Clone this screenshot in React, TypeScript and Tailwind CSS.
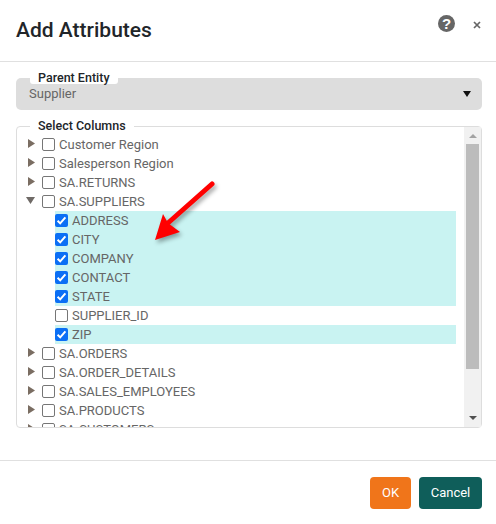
const topRows = ['Customer Region', 'Salesperson Region', 'SA.RETURNS']
const children = [
  { name: 'ADDRESS', checked: true },
  { name: 'CITY', checked: true },
  { name: 'COMPANY', checked: true },
  { name: 'CONTACT', checked: true },
  { name: 'STATE', checked: true },
  { name: 'SUPPLIER_ID', checked: false },
  { name: 'ZIP', checked: true },
]
const bottomRows = ['SA.ORDERS', 'SA.ORDER_DETAILS', 'SA.SALES_EMPLOYEES', 'SA.PRODUCTS', 'SA.CUSTOMERS']

function Checkbox({ checked }: { checked: boolean }) {
  if (checked) {
    return (
      <span className="flex h-[13px] w-[13px] shrink-0 items-center justify-center rounded-[2px] bg-[#0b6ff5]">
        <svg viewBox="0 0 13 13" className="h-[13px] w-[13px]">
          <path d="M2.6 6.8 5.2 9.4 10.4 3.4" fill="none" stroke="#fff" strokeWidth="2" />
        </svg>
      </span>
    )
  }
  return <span className="h-[13px] w-[13px] shrink-0 rounded-[2px] border border-[#767676] bg-white" />
}

function ParentRow({ label, open = false }: { label: string; open?: boolean }) {
  return (
    <div className="flex h-[19px] items-center">
      <span className="flex w-[25px] shrink-0 justify-end pr-[7px]">
        {open ? (
          <svg viewBox="0 0 9 7" className="mb-[3px] h-[7px] w-[9px]">
            <path d="M0 0H9L4.5 7Z" fill="#6f6a66" />
          </svg>
        ) : (
          <svg viewBox="0 0 7 9" className="mb-[3px] h-[9px] w-[7px]">
            <path d="M0 0 7 4.5 0 9Z" fill="#7a6d62" />
          </svg>
        )}
      </span>
      <Checkbox checked={false} />
      <span className="ml-[4px] text-[13px] text-[#666666]">{label}</span>
    </div>
  )
}

function ChildRow({ label, checked }: { label: string; checked: boolean }) {
  return (
    <div className={`ml-[38px] flex h-[19px] w-[401px] items-center ${checked ? 'bg-[#c9f3f2]' : ''}`}>
      <Checkbox checked={checked} />
      <span className="ml-[4px] text-[13px] text-[#666666]">{label}</span>
    </div>
  )
}

export default function App() {
  return (
    <div className="relative flex h-[524px] w-[496px] flex-col bg-white font-['Roboto',sans-serif]">
      <header className="flex h-[62px] shrink-0 justify-between border-b border-[#e0e0e0] pl-[16px] pr-[15px]">
        <h1 className="mt-[15px] text-[21px] leading-[30px] font-medium text-[#212529]">Add Attributes</h1>
        <div className="mt-[15px] flex h-[17px] items-center gap-[18px]">
          <span className="flex h-[17px] w-[17px] items-center justify-center rounded-full bg-[#666666] font-['Liberation_Sans',sans-serif] text-[15px] leading-none font-bold text-white">
            ?
          </span>
          <svg viewBox="0 0 8 8" className="mt-[2px] h-[8px] w-[8px]">
            <path d="M1 1 7 7M7 1 1 7" stroke="#666666" strokeWidth="1.7" fill="none" />
          </svg>
        </div>
      </header>

      <div className="relative mt-[16px] mr-[14px] ml-[16px] flex h-[32px] items-center justify-between rounded-[5px] bg-[#dddddd] pl-[13px] pr-[11px]">
        <span className="text-[13px] text-[#666666]">Supplier</span>
        <svg viewBox="0 0 8 6" className="h-[6px] w-[8px]">
          <path d="M0 0H8L4 6Z" fill="#111111" />
        </svg>
        <span className="absolute top-[-7px] left-[14px] h-[13px] rounded-b-[3px] bg-white px-[8px] text-[12.5px] leading-[13px] font-medium text-[#212529]">
          Parent Entity
        </span>
      </div>

      <div className="relative mt-[16px] mr-[14px] ml-[16px] h-[302px] rounded-[4px] border border-[#dddddd]">
        <span className="absolute top-[-8px] left-[13px] z-10 bg-white px-[8px] text-[12.5px] leading-[14px] font-medium text-[#212529]">
          Select Columns
        </span>
        <div className="flex h-[300px]">
          <div className="flex-1 overflow-hidden pt-[8px]">
            {topRows.map((r) => (
              <ParentRow key={r} label={r} />
            ))}
            <ParentRow label="SA.SUPPLIERS" open />
            {children.map((c) => (
              <ChildRow key={c.name} label={c.name} checked={c.checked} />
            ))}
            {bottomRows.map((r) => (
              <ParentRow key={r} label={r} />
            ))}
          </div>
          <div className="flex w-[17px] shrink-0 flex-col items-center justify-between bg-[#f1f1f1]">
            <div className="flex w-full flex-col items-center">
              <svg viewBox="0 0 8 4" className="mt-[7px] mb-[6px] h-[4px] w-[8px]">
                <path d="M0 4H8L4 0Z" fill="#a3a3a3" />
              </svg>
              <div className="h-[225px] w-[13px] bg-[#bcbcbc]" />
            </div>
            <svg viewBox="0 0 8 4" className="mb-[7px] h-[4px] w-[8px]">
              <path d="M0 0H8L4 4Z" fill="#505050" />
            </svg>
          </div>
        </div>
      </div>

      <footer className="mt-[32px] flex flex-1 justify-end gap-[8px] border-t border-[#e0e0e0] pt-[16px] pr-[14px]">
        <button className="h-[32px] w-[41px] rounded-[4px] bg-[#f0751a] text-[13px] text-white">OK</button>
        <button className="h-[32px] w-[63px] rounded-[4px] bg-[#0f5e5a] text-[13px] text-white">Cancel</button>
      </footer>

      {/* red annotation arrow sitting over the list */}
      <svg
        viewBox="0 0 70 70"
        className="absolute top-[178px] left-[150px] h-[70px] w-[70px] drop-shadow-[2px_3px_2px_rgba(0,0,0,0.35)]"
      >
        <path d="M62 6 18 45" stroke="#ff0000" strokeWidth="5" strokeLinecap="round" />
        <path d="M5 62 13 36 18 45 30 54Z" fill="#ff0000" />
      </svg>
    </div>
  )
}
